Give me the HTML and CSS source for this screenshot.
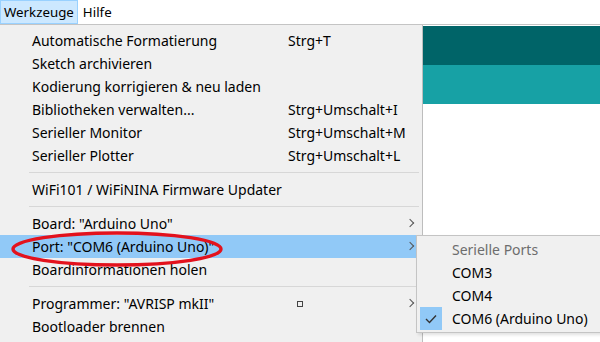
FILE: index.html
```html
<!DOCTYPE html>
<html lang="de">
<head>
  <meta charset="UTF-8" />
  <title>Werkzeuge</title>
  <link rel="stylesheet" href="styles.css">
</head>
<body>
  <div class="menubar">
    <span class="mb-item active">Werkzeuge</span>
    <span class="mb-item">Hilfe</span>
  </div>

  <div class="workspace">
    <div class="menu">
      <div class="item"><span class="label">Automatische Formatierung</span><span class="key">Strg+T</span></div>
      <div class="item"><span class="label">Sketch archivieren</span></div>
      <div class="item"><span class="label">Kodierung korrigieren &amp; neu laden</span></div>
      <div class="item"><span class="label">Bibliotheken verwalten...</span><span class="key">Strg+Umschalt+I</span></div>
      <div class="item"><span class="label">Serieller Monitor</span><span class="key">Strg+Umschalt+M</span></div>
      <div class="item"><span class="label">Serieller Plotter</span><span class="key">Strg+Umschalt+L</span></div>
      <div class="sep"></div>
      <div class="item"><span class="label">WiFi101 / WiFiNINA Firmware Updater</span></div>
      <div class="sep"></div>
      <div class="item sub"><span class="label">Board: "Arduino Uno"</span></div>
      <div class="item sub selected"><span class="label">Port: "COM6 (Arduino Uno)"</span></div>
      <div class="item"><span class="label">Boardinformationen holen</span></div>
      <div class="sep"></div>
      <div class="item sub"><span class="label">Programmer: "AVRISP mkII"</span><span class="key"><i class="box"></i></span></div>
      <div class="item"><span class="label">Bootloader brennen</span></div>
    </div>

    <div class="editor">
      <div class="bar dark"></div>
      <div class="bar light"></div>
    </div>
  </div>

  <div class="submenu">
    <div class="sitem title">Serielle Ports</div>
    <div class="sitem">COM3</div>
    <div class="sitem">COM4</div>
    <div class="sitem checked">
      <span class="check">
        <svg width="12" height="10" viewBox="0 0 12 10"><polyline points="1,5 4.5,8.5 11,1.5" fill="none" stroke="#333" stroke-width="1.4"/></svg>
      </span>
      COM6 (Arduino Uno)
    </div>
  </div>

  <!-- rote Markierung um den Port -->
  <svg class="ring" width="240" height="44" viewBox="0 0 240 44">
    <ellipse cx="117" cy="22" rx="104" ry="16" fill="none" stroke="#e3121d" stroke-width="3.4"/>
  </svg>
</body>
</html>
```

FILE: styles.css
```css
body {
  margin: 0;
  width: 600px;
  height: 342px;
  overflow: hidden;
  font-family: "Noto Sans", "Open Sans", sans-serif;
  font-size: 14px;
  color: #000;
  background: #fff;
  position: relative;
}

.menubar {
  height: 24px;
  border-bottom: 1px solid #c4c4c4;
  display: flex;
  align-items: stretch;
  background: #fff;
  font-size: 13.3px;
}

.mb-item {
  display: flex;
  align-items: center;
  padding: 0 3px 0 3px;
  line-height: 22px;
  border: 1px solid transparent;
  box-sizing: border-box;
  height: 24px;
}

.mb-item.active {
  background: #cce8ff;
  border-color: #99d1ff;
  margin-right: 1px;
}

.workspace {
  display: flex;
  height: 317px;
}

.menu {
  width: 422px;
  background: #f0f0f0;
  border-right: 1px solid #bdbdbd;
  padding-top: 4px;
  box-sizing: content-box;
}

.item {
  height: 23px;
  display: flex;
  align-items: center;
  padding-left: 32px;
  position: relative;
}

.item .label {
  width: 256px;
  white-space: nowrap;
}

.item .key {
  white-space: nowrap;
}

.item.selected {
  background: #91c9f7;
}

.item.sub::after {
  content: "";
  position: absolute;
  right: 9px;
  top: 8px;
  width: 5px;
  height: 5px;
  border-top: 1.3px solid #555;
  border-right: 1.3px solid #555;
  transform: rotate(45deg);
}

.box {
  display: inline-block;
  width: 4px;
  height: 4px;
  border: 1.5px solid #444;
  margin-left: 9px;
  margin-top: -2px;
  vertical-align: middle;
}

.sep {
  height: 11px;
  margin: 0 3px 0 29px;
  display: flex;
  align-items: center;
}

.sep::before {
  content: "";
  flex: 1;
  height: 1px;
  background: #d7d7d7;
}

.editor {
  flex: 1;
  padding-top: 1px;
}

.bar {
  height: 39px;
}

.bar.dark {
  background: #006468;
}

.bar.light {
  background: #17a1a5;
}

.submenu {
  position: absolute;
  left: 416px;
  top: 235px;
  width: 200px;
  background: #f0f0f0;
  border: 1px solid #c4c4c4;
  padding: 2px 0;
  box-shadow: 2px 2px 3px rgba(0, 0, 0, 0.12);
}

.sitem {
  height: 23px;
  line-height: 23px;
  padding-left: 35px;
  position: relative;
  white-space: nowrap;
}

.sitem.title {
  color: #6d6d6d;
}

.check {
  position: absolute;
  left: 3px;
  top: 0;
  width: 22px;
  height: 23px;
  background: #91c9f7;
  display: flex;
  align-items: center;
  justify-content: center;
}

.ring {
  position: absolute;
  left: 0;
  top: 227px;
}
```
